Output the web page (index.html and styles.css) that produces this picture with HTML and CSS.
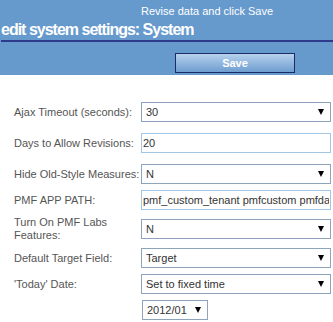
FILE: index.html
```html
<!DOCTYPE html>
<html lang="en">
<head>
<meta charset="UTF-8">
<title>edit system settings: System</title>
<link rel="stylesheet" href="styles.css">
</head>
<body>
<div class="header">
<div class="hint">Revise data and click Save</div>
<h1 class="title">edit system settings: System</h1>
<div class="actions"><button type="submit" form="settings-form" class="save-btn">Save</button></div>
</div>

<form id="settings-form" class="settings">
<div class="row spaced">
<label for="ajax-timeout">Ajax Timeout (seconds):</label>
<div class="select"><select id="ajax-timeout"><option>30</option><option>60</option></select></div>
</div>
<div class="row spaced">
<label for="revision-days">Days to Allow Revisions:</label>
<input type="text" id="revision-days" value="20">
</div>
<div class="row">
<label for="hide-old">Hide Old-Style Measures:</label>
<div class="select"><select id="hide-old"><option>N</option><option>Y</option></select></div>
</div>
<div class="row">
<label for="app-path">PMF APP PATH:</label>
<input type="text" id="app-path" value="pmf_custom_tenant pmfcustom pmfdata">
</div>
<div class="row">
<label for="labs">Turn On PMF Labs Features:</label>
<div class="select"><select id="labs"><option>N</option><option>Y</option></select></div>
</div>
<div class="row">
<label for="target-field">Default Target Field:</label>
<div class="select"><select id="target-field"><option>Target</option></select></div>
</div>
<div class="row">
<label for="today">'Today' Date:</label>
<div class="select"><select id="today"><option>Set to fixed time</option><option>Use current time</option></select></div>
</div>
<div class="row">
<span class="label-space"></span>
<div class="select small"><select id="today-month"><option>2012/01</option></select></div>
</div>
</form>
</body>
</html>
```

FILE: styles.css
```css
body {
    margin: 0;
    font-family: "Liberation Sans", Arial, sans-serif;
    font-size: 11px;
    background: #fff;
}

.header {
    background-color: #6699cc;
    height: 75px;
    padding-top: 4px;
    box-sizing: border-box;
}

.hint {
    padding-left: 141px;
    line-height: 14px;
    color: #fff;
}

.title {
    margin: 3px 0 0 1px;
    padding-bottom: 1px;
    font-size: 16px;
    line-height: 18px;
    font-weight: bold;
    letter-spacing: -1px;
    color: #fff;
    border-bottom: 2px solid #2e3a8c;
}

.actions {
    padding: 11px 0 0 175px;
}

.save-btn {
    display: block;
    width: 120px;
    height: 20px;
    padding: 0;
    border: 1px solid #1c2a66;
    background: linear-gradient(#b6d1ec, #6e9dd0);
    color: #fff;
    font-family: "Liberation Sans", Arial, sans-serif;
    font-size: 11px;
    font-weight: bold;
    cursor: pointer;
}

.settings {
    padding-top: 27px;
}

.row {
    display: flex;
    align-items: center;
    margin-bottom: 6px;
}

.row.spaced {
    margin-bottom: 11px;
}

.row label, .label-space {
    width: 127px;
    padding-left: 14px;
    flex-shrink: 0;
    line-height: 13px;
    color: #555;
}

input, select {
    box-sizing: border-box;
    height: 20px;
    font-family: "Liberation Sans", Arial, sans-serif;
    font-size: 11px;
    color: #333;
    background: #fff;
    margin: 0;
}

input {
    width: 190px;
    padding: 0 1px;
    border: 1px solid #a3c6e4;
}

.select {
    position: relative;
}

.select select {
    width: 190px;
    padding: 0 18px 0 4px;
    border: 1px solid #8ea3bc;
    border-radius: 0;
    appearance: none;
    -webkit-appearance: none;
}

.select::after {
    content: "";
    position: absolute;
    right: 7px;
    top: 7px;
    border-left: 3px solid transparent;
    border-right: 3px solid transparent;
    border-top: 6px solid #000;
    pointer-events: none;
}

.select.small {
    margin-left: 1px;
}

.select.small select {
    width: 66px;
}
```
